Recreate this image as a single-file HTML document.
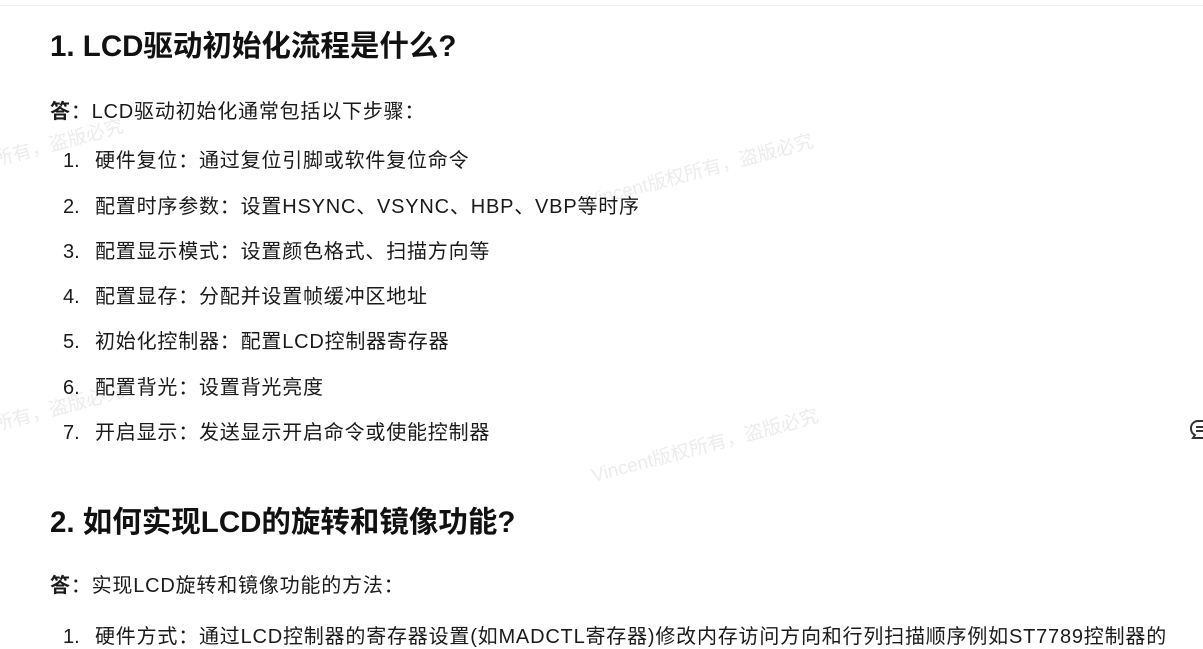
<!DOCTYPE html>
<html><head><meta charset="utf-8"><style>
body{margin:0;width:1203px;height:649px;overflow:hidden;background:#fff;font-family:"Liberation Sans","Noto Sans CJK SC",sans-serif;color:#1a1a1a;position:relative}
.top{position:absolute;left:0;right:0;top:5px;height:1px;background:#eee}
.t{position:absolute;white-space:nowrap}
h2{position:absolute;margin:0;font-size:29.5px;font-weight:bold;white-space:nowrap;left:50px;color:#111}
.p{font-size:20px;left:50px;letter-spacing:0.8px}
.li{font-size:20px;left:63px;letter-spacing:0.8px}
.li span{display:inline-block;width:32px;letter-spacing:0}
.wm{position:absolute;font-size:19px;color:#ececec;transform:rotate(-15deg);transform-origin:left bottom;white-space:nowrap}
</style></head><body>
<div class="top"></div>
<div class="wm" style="left:590px;top:186px">Vincent版权所有，盗版必究</div>
<div class="wm" style="left:595px;top:461px">Vincent版权所有，盗版必究</div>
<div class="wm" style="left:-100px;top:171px">Vincent版权所有，盗版必究</div>
<div class="wm" style="left:-100px;top:436px">Vincent版权所有，盗版必究</div>
<h2 style="top:23px">1. LCD驱动初始化流程是什么?</h2>
<div class="t p" style="top:95px"><b>答</b>：LCD驱动初始化通常包括以下步骤：</div>
<div class="t li" style="top:144px"><span>1.</span>硬件复位：通过复位引脚或软件复位命令</div>
<div class="t li" style="top:190px"><span>2.</span>配置时序参数：设置HSYNC、VSYNC、HBP、VBP等时序</div>
<div class="t li" style="top:235px"><span>3.</span>配置显示模式：设置颜色格式、扫描方向等</div>
<div class="t li" style="top:280px"><span>4.</span>配置显存：分配并设置帧缓冲区地址</div>
<div class="t li" style="top:325px"><span>5.</span>初始化控制器：配置LCD控制器寄存器</div>
<div class="t li" style="top:371px"><span>6.</span>配置背光：设置背光亮度</div>
<div class="t li" style="top:416px"><span>7.</span>开启显示：发送显示开启命令或使能控制器</div>
<h2 style="top:499px">2. 如何实现LCD的旋转和镜像功能?</h2>
<div class="t p" style="top:569px"><b>答</b>：实现LCD旋转和镜像功能的方法：</div>
<div class="t li" style="top:620px"><span>1.</span>硬件方式：通过LCD控制器的寄存器设置(如MADCTL寄存器)修改内存访问方向和行列扫描顺序例如ST7789控制器的</div>
<svg style="position:absolute;left:1189px;top:419px" width="14" height="22" viewBox="0 0 14 22"><path d="M14 2H9a7 7 0 0 0-7 7v1a7 7 0 0 0 4 6l-2 3h10" fill="none" stroke="#333" stroke-width="2"/><path d="M7 8h7M7 12h7" stroke="#333" stroke-width="2"/></svg>
</body></html>
